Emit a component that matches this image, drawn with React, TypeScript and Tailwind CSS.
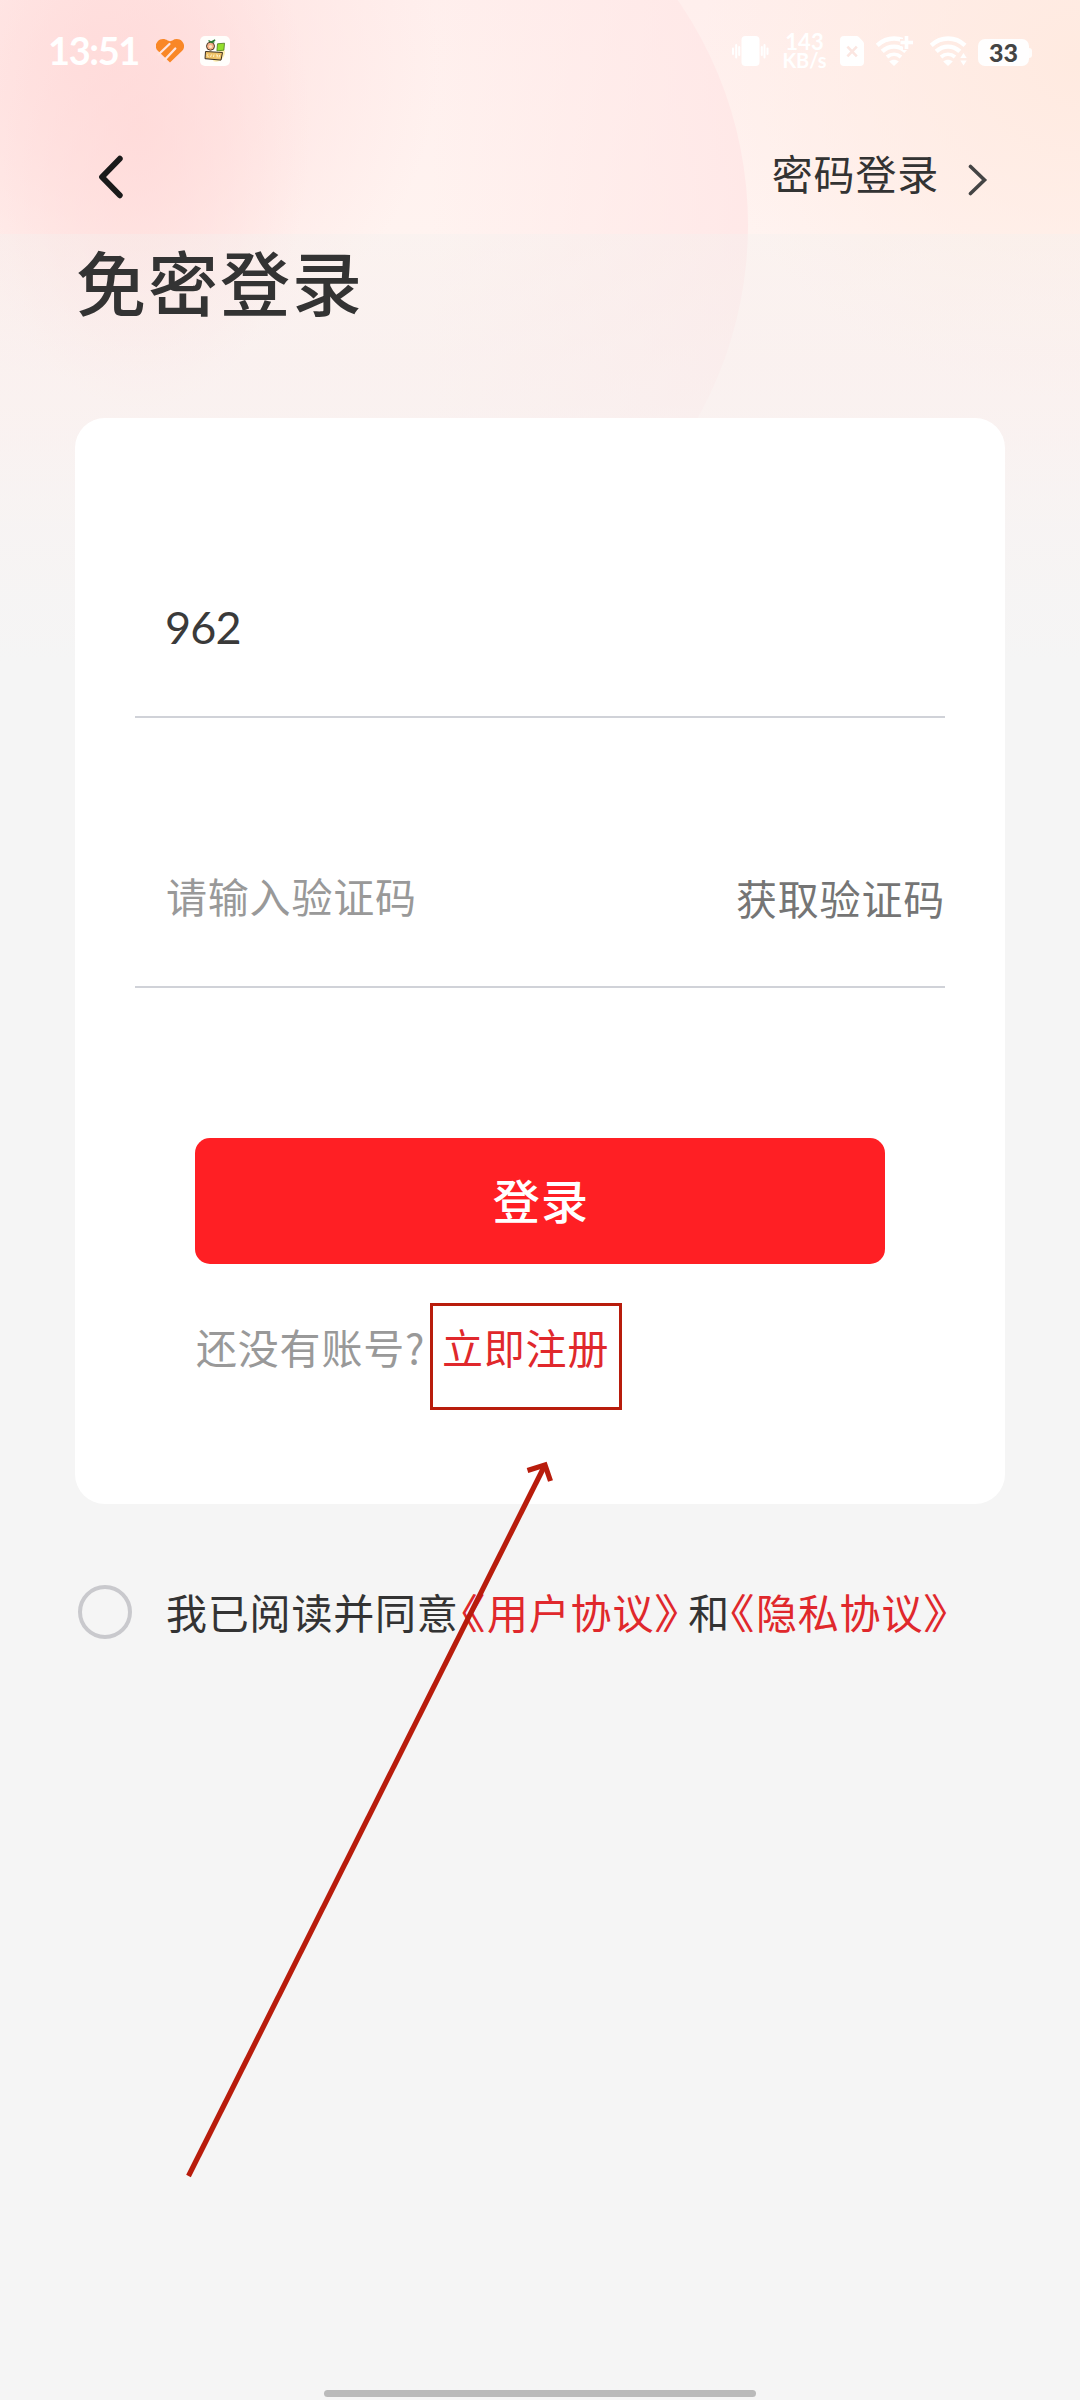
import type { ReactNode } from 'react';

const cjk = "font-['Noto_Sans_CJK_SC',sans-serif]";

function Background() {
  return (
    <div className="absolute inset-x-0 top-0 h-[720px] overflow-hidden">
      <div className="absolute inset-0 bg-[linear-gradient(to_bottom,#ffefed_0%,#fff3f0_33%,#ffefed_50%,#ffeeec_100%)]" />
      <div className="absolute inset-0 bg-[radial-gradient(ellipse_380px_340px_at_1080px_60px,#ffeae0_0%,#ffeae090_45%,#ffeae000_100%)]" />
      <div className="absolute -left-[42px] -top-[170px] h-[790px] w-[790px] rounded-full bg-[linear-gradient(to_right,#ffe7e700_60%,#ffe5e5c0_100%)]" />
      <div className="absolute inset-0 bg-[radial-gradient(ellipse_340px_320px_at_100px_60px,#ffe0df_0%,#ffe0df90_45%,#ffe0df00_100%)]" />
      <div className="absolute inset-0 bg-[radial-gradient(ellipse_170px_280px_at_140px_130px,#ffd8d7b0_0%,#ffd8d760_50%,#ffd8d700_100%)]" />
      <div className="absolute inset-x-0 bottom-0 top-[234px] bg-[linear-gradient(to_bottom,#f3f1ef5c_0%,#f5f4f380_35%,#f5f5f5c8_60%,#f5f5f5_88%)]" />
    </div>
  );
}

function HeartIcon() {
  return (
    <svg width="28" height="24" viewBox="0 0 28 24" className="ml-[18px]">
      <path
        d="M14 23.600 1.800 11.800A6.800 6.800 0 0 1 1.600 2.400C4.300-.5 8.800-.6 11.600 1.600L14 2.200l2.400-.8c3-2 7.300-1.800 9.800 1a6.800 6.800 0 0 1 0 9.400Z"
        fill="#f98726"
      />
      <path d="M2.500 15.500 13.500 5M8.300 21.300 19.300 9.500" fill="none" stroke="#ffe4df" strokeWidth="2.300" strokeLinecap="round" />
    </svg>
  );
}

function FruitAppIcon() {
  return (
    <svg width="30" height="30" viewBox="0 0 30 30" className="ml-4">
      <rect width="30" height="30" rx="5" fill="#fffefb" />
      <path d="M20 14c5-2 6 2 4 6s-6 7-11 5Z" fill="#fdeeb0" />
      <circle cx="10.500" cy="10.200" r="4" fill="#f7b288" stroke="#4a3a28" strokeWidth="1" />
      <circle cx="10.500" cy="10.500" r="1.600" fill="#fbe6c4" />
      <path d="M8.500 4.500 11 6.200l4.200-2.400M11.500 6.500l3-1" fill="none" stroke="#2f7a35" strokeWidth="1.500" />
      <path d="m17.500 7.800 7-.6-.6 7-7 .6Z" fill="#93df2b" stroke="#4f7a20" strokeWidth=".8" strokeLinejoin="round" />
      <path d="m5.500 15.500 17 1-1.500 7.600-16-1.400Z" fill="#efc266" stroke="#3d3020" strokeWidth="1" strokeLinejoin="round" />
      <path d="M8 18.200c-1.500 1-.5 2.800.6 2.400M11.500 18.500l-1 2.500M14 18.500l-.5 2.500M16 19h1.500l-.5 2.500M19.500 19l-.5 2.500" fill="none" stroke="#fff2c8" strokeWidth="1" />
    </svg>
  );
}

function VibrateIcon() {
  return (
    <svg width="37" height="30" viewBox="0 0 37 30" fill="#fff">
      <rect x="9.500" width="18" height="30" rx="4" />
      <rect x="0" y="11.500" width="2" height="7.500" rx="1" />
      <rect x="3.200" y="8" width="2" height="14.500" rx="1" />
      <rect x="6.200" y="10" width="2" height="10" rx="1" />
      <rect x="28.800" y="10" width="2" height="10" rx="1" />
      <rect x="31.500" y="8" width="2" height="14.500" rx="1" />
      <rect x="34.500" y="11.500" width="2" height="7.500" rx="1" />
    </svg>
  );
}

function SimIcon() {
  return (
    <svg width="24" height="30" viewBox="0 0 24 30" className="ml-[14px]">
      <path d="M4 0h12.500c1 0 1.700.3 2.400 1l4 4.200c.7.7 1.100 1.500 1.100 2.500V26a4 4 0 0 1-4 4H4a4 4 0 0 1-4-4V4a4 4 0 0 1 4-4Z" fill="#fff" />
      <path d="m7.400 10.600 9.400 9.800M16.800 10.600l-9.400 9.800" stroke="#fbe6e1" strokeWidth="2.600" />
    </svg>
  );
}

// wifi fan, the corner mark is passed in
function Wifi({ children }: { children: ReactNode }) {
  return (
    <svg width="38" height="30" viewBox="0 0 38 30" fill="none" stroke="#fff" strokeWidth="4.400">
      <path d="M1.200 9.400c9.800-9.200 24-9.200 33.800 0" />
      <path d="M6.200 15.400c7-6.400 16.600-6.400 23.600 0" />
      <path d="M11 21c4.200-3.600 9.800-3.600 14 0" strokeWidth="3.800" />
      <path d="M13.200 25.400c2.800-2.200 6.800-2.200 9.600 0L18 30Z" fill="#fff" stroke="none" />
      {children}
    </svg>
  );
}

function StatusBar() {
  return (
    <div className="flex h-[102px] items-center pl-[48px] pr-[48px]">
      <span className="w-[90px] whitespace-nowrap pb-[2px] font-['Lato',sans-serif] text-[38px] font-bold leading-[38px] tracking-[-1.400px] text-white">
        13:51
      </span>
      <HeartIcon />
      <FruitAppIcon />
      <div className="ml-auto flex items-center">
        <VibrateIcon />
        <div className="ml-[14px] flex w-[43px] flex-col items-center font-['Lato',sans-serif] font-bold text-white">
          <span className="text-[22px] leading-[19px]">143</span>
          <span className="text-[20px] leading-[19px]">KB/s</span>
        </div>
        <SimIcon />
        <div className="ml-[12px]">
          <Wifi>
            <path d="M30.500 0v14M24 6.500h14" stroke="#ffece7" strokeWidth="7" />
            <path d="M30.500 0v13M24.500 6.500h12.500" strokeWidth="3.600" />
          </Wifi>
        </div>
        <div className="ml-[16px]">
          <Wifi>
            <path d="M29 16h9v14h-9Z" fill="#ffece5" stroke="none" />
            <path d="m33.500 17 3.200 5h-6.400ZM33.500 29.500l3.200-5h-6.400Z" fill="#fff" stroke="none" />
          </Wifi>
        </div>
        <div className="ml-[10px] flex items-center pt-[3px]">
          <div className="flex h-[27px] w-[51px] items-center justify-center rounded-[7px] bg-white/95 pb-[1px] font-['Lato',sans-serif] text-[25px] font-black leading-none text-[#444]">
            33
          </div>
          <div className="h-[10px] w-[3px] rounded-r-full bg-white/90" />
        </div>
      </div>
    </div>
  );
}

function Header() {
  return (
    <div className="flex h-[132px] items-start justify-between pl-[97px] pr-[92px]">
      <button className="mt-[53px]">
        <svg width="26" height="44" viewBox="0 0 26 44" fill="none" stroke="#1a1a1a" strokeWidth="5.800" strokeLinecap="round" strokeLinejoin="round">
          <path d="M22.800 3.700 5 22l17.800 18.300" />
        </svg>
      </button>
      <button className="mt-[40px] flex items-start">
        <span className={`${cjk} text-[41px] leading-[60px] tracking-[0.800px] text-[#333]`}>密码登录</span>
        <svg width="20" height="32" viewBox="0 0 20 32" className="ml-[29px] mt-[22px]" fill="none" stroke="#444" strokeWidth="3.600" strokeLinecap="round">
          <path d="M2.500 2.500 16.500 16 2.500 29.500" />
        </svg>
      </button>
    </div>
  );
}

function LoginCard() {
  return (
    <div className="mx-[75px] mt-[97px] h-[1086px] rounded-[30px] bg-white px-[60px]">
      <div className="flex h-[300px] items-start border-b-2 border-[#d0d2d8] pl-[30px] pt-[179px]">
        <span className="font-['Lato',sans-serif] text-[45px] leading-[60px] tracking-[-0.800px] text-[#3a3a3a]">962</span>
      </div>
      <div className={`${cjk} flex h-[270px] items-start justify-between border-b-2 border-[#d0d2d8] pl-[31px] pt-[147px] text-[41px] leading-[60px] tracking-[0.800px]`}>
        <span className="text-[#999]">请输入验证码</span>
        <button className="mt-[2px] tracking-[0.800px] text-[#757575]">获取验证码</button>
      </div>
      <button className={`${cjk} mx-[60px] mt-[150px] block h-[126px] w-[690px] rounded-[15px] bg-[#ff1f24] text-[47px] font-medium leading-[120px] tracking-[1.200px] text-white`}>
        <span className="block pb-[4px] pl-[2px]">登录</span>
      </button>
      <div className={`${cjk} flex items-start pl-[61px] pt-[39px] text-[41px] tracking-[0.800px]`}>
        <span className="w-[234px] whitespace-nowrap pt-[13px] leading-[60px] text-[#999]">还没有账号?</span>
        <div className="h-[107px] w-[192px] border-[3px] border-[#b81c0c] pl-[9px] pt-[10px]">
          <button className="whitespace-nowrap leading-[60px] tracking-[0.800px] text-[#e0282c]">立即注册</button>
        </div>
      </div>
    </div>
  );
}

// link with half-width title marks, so the text around it stays tight
function AgreementLink({ children }: { children: ReactNode }) {
  return (
    <a className="flex text-[#e0282c]">
      <span className="w-[26px] origin-left scale-x-120 [font-feature-settings:'halt']">《</span>
      <span>{children}</span>
      <span className="w-[34px] origin-left scale-x-120 [font-feature-settings:'halt']">》</span>
    </a>
  );
}

function Agreement() {
  return (
    <div className={`${cjk} mt-[81px] flex items-center whitespace-nowrap pl-[78px] text-[41px] leading-[54px] tracking-[0.800px] text-[#333]`}>
      <span className="h-[54px] w-[54px] rounded-full border-4 border-[#c9c9cd]" />
      <div className="-mt-[3px] ml-[34px] flex">
        <span className="w-[295px]">我已阅读并同意</span>
        <AgreementLink>用户协议</AgreementLink>
        <span>和</span>
        <AgreementLink>隐私协议</AgreementLink>
      </div>
    </div>
  );
}

function Arrow() {
  return (
    <svg width="380" height="724" viewBox="0 0 380 724" className="absolute left-[180px] top-[1457px]" fill="none" stroke="#b81c0c" strokeWidth="5.200">
      <path d="M8.500 719 365 8" />
      <path d="M347.500 13.500 365 8 370.500 24" />
    </svg>
  );
}

export default function App() {
  return (
    <div className="relative flex h-[2400px] w-[1080px] flex-col overflow-hidden bg-[#f5f5f5]">
      <Background />
      <div className="relative flex flex-1 flex-col">
        <StatusBar />
        <Header />
        <h1 className={`${cjk} pl-[76px] pt-[7px] text-[70px] font-medium leading-[80px] tracking-[2px] text-[#333]`}>免密登录</h1>
        <LoginCard />
        <Agreement />
        <div className="mx-auto mb-[3px] mt-auto h-[7px] w-[432px] rounded-full bg-[#bababa]" />
      </div>
      <Arrow />
    </div>
  );
}
